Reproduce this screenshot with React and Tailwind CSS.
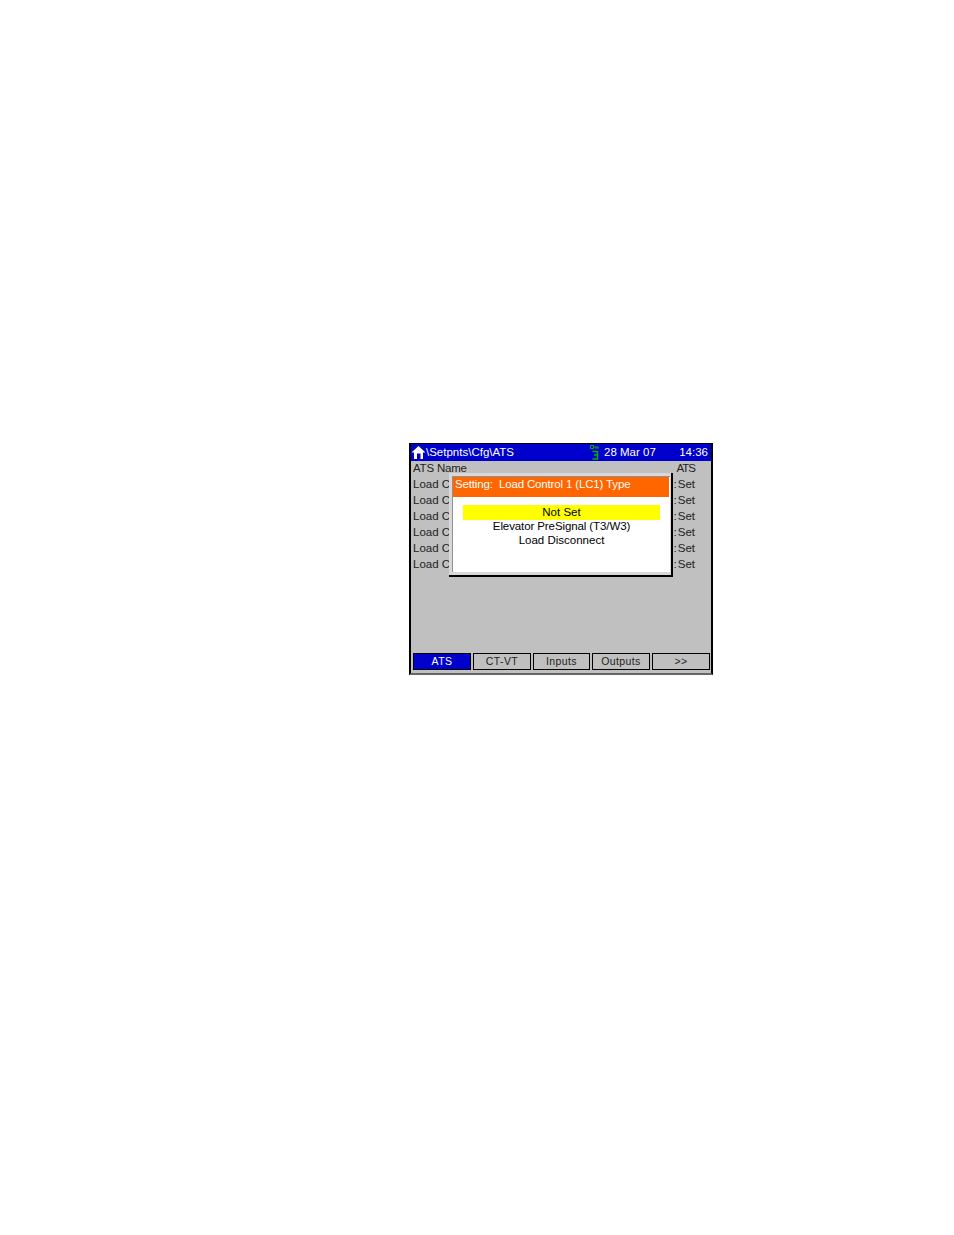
const rows = ['Load C', 'Load C', 'Load C', 'Load C', 'Load C', 'Load C'];
const tabs = [
  { label: 'ATS', w: 'w-[58px]' },
  { label: 'CT-VT', w: 'w-[58px]' },
  { label: 'Inputs', w: 'w-[57px]' },
  { label: 'Outputs', w: 'w-[58px]' },
  { label: '>>', w: 'w-[58px]' },
];

function HomeIcon() {
  return (
    <svg width="15" height="15" viewBox="0 0 15 15" className="shrink-0">
      <path d="M7.5 1 L14.5 7.5 L12 7.5 L12 14 L3 14 L3 7.5 L0.5 7.5 Z" fill="#fff" />
      <rect x="6" y="8.5" width="3.5" height="5.5" fill="#0000cc" />
    </svg>
  );
}

function KeyIcon() {
  return (
    <svg width="9" height="15" viewBox="0 0 9 15" className="shrink-0">
      <path d="M0.5 0.5H3.5V3.5H0.5ZM3.5 2H8.5M6 2V4M8 2V4" fill="none" stroke="#00b000" strokeWidth="1" />
      <path d="M2.5 6.5H7.5V10H4M7.5 10V14H2.5" fill="none" stroke="#00b000" strokeWidth="1.5" />
    </svg>
  );
}

export default function App() {
  return (
    <div className="min-h-[1235px] bg-white pt-[443px] pl-[409px] font-['Liberation_Sans',sans-serif] text-[11.5px] leading-4 text-[#222]">
      <div className="relative flex h-[232px] w-[304px] flex-col border-x-2 border-t border-b-2 border-black border-b-[#666] bg-[#c0c0c0]">
        <div className="flex h-[17px] items-center bg-[#0000cc] pr-[3px] text-white">
          <HomeIcon />
          <span className="-mt-[2px]">\Setpnts\Cfg\ATS</span>
          <span className="ml-[76px]"><KeyIcon /></span>
          <span className="-mt-[2px] ml-[5px]">28 Mar 07</span>
          <span className="-mt-[2px] ml-auto">14:36</span>
        </div>

        <div className="-mt-px flex justify-between pl-[2px] pr-[16px]">
          <div className="flex flex-col">
            <div className="h-4 tracking-[-0.2px]">ATS Name</div>
            {rows.map((r, i) => (
              <div key={i} className="h-4">{r}</div>
            ))}
          </div>
          <div className="flex flex-col items-end">
            <div className="h-4 tracking-[-1px]">ATS</div>
            {rows.map((r, i) => (
              <div key={i} className="flex h-4">
                <span className="mr-px">:</span>
                <span>Set</span>
              </div>
            ))}
          </div>
        </div>

        <div className="mt-auto mb-[3px] flex gap-[2px] pl-[2px] text-[10.5px] leading-[14px] tracking-[0.4px]">
          {tabs.map((t, i) => (
            <div
              key={t.label}
              className={
                i === 0
                  ? 'flex h-[17px] shrink-0 items-center justify-center border border-black bg-[#0000cc] pb-[2px] text-white ' + t.w
                  : 'flex h-[17px] shrink-0 items-center justify-center border border-black bg-[#c0c0c0] pb-[2px] ' + t.w
              }
            >
              {t.label}
            </div>
          ))}
        </div>

        <div className="absolute top-[29px] left-[38px] h-[104px] w-[224px] border-r-2 border-b-2 border-black bg-[#d8d8d8] pt-[3px] pr-[1px] pb-[3px] pl-[3px]">
          <div className="h-full border-t border-l border-[#909090] bg-white">
            <div className="mr-[1px] flex h-[20px] items-center bg-[#ff6600] pb-[6px] pl-[2px] tracking-[-0.15px] whitespace-pre text-white">
              Setting:  Load Control 1 (LC1) Type
            </div>
            <div className="flex flex-col items-center pt-[8px] text-black">
              <div className="h-[15px] w-[197px] bg-[#ffff00] text-center leading-[15px]">Not Set</div>
              <div className="h-[14px] leading-[12px] tracking-[-0.1px]">Elevator PreSignal (T3/W3)</div>
              <div className="h-[14px] leading-[12px]">Load Disconnect</div>
            </div>
          </div>
        </div>
      </div>
    </div>
  );
}
